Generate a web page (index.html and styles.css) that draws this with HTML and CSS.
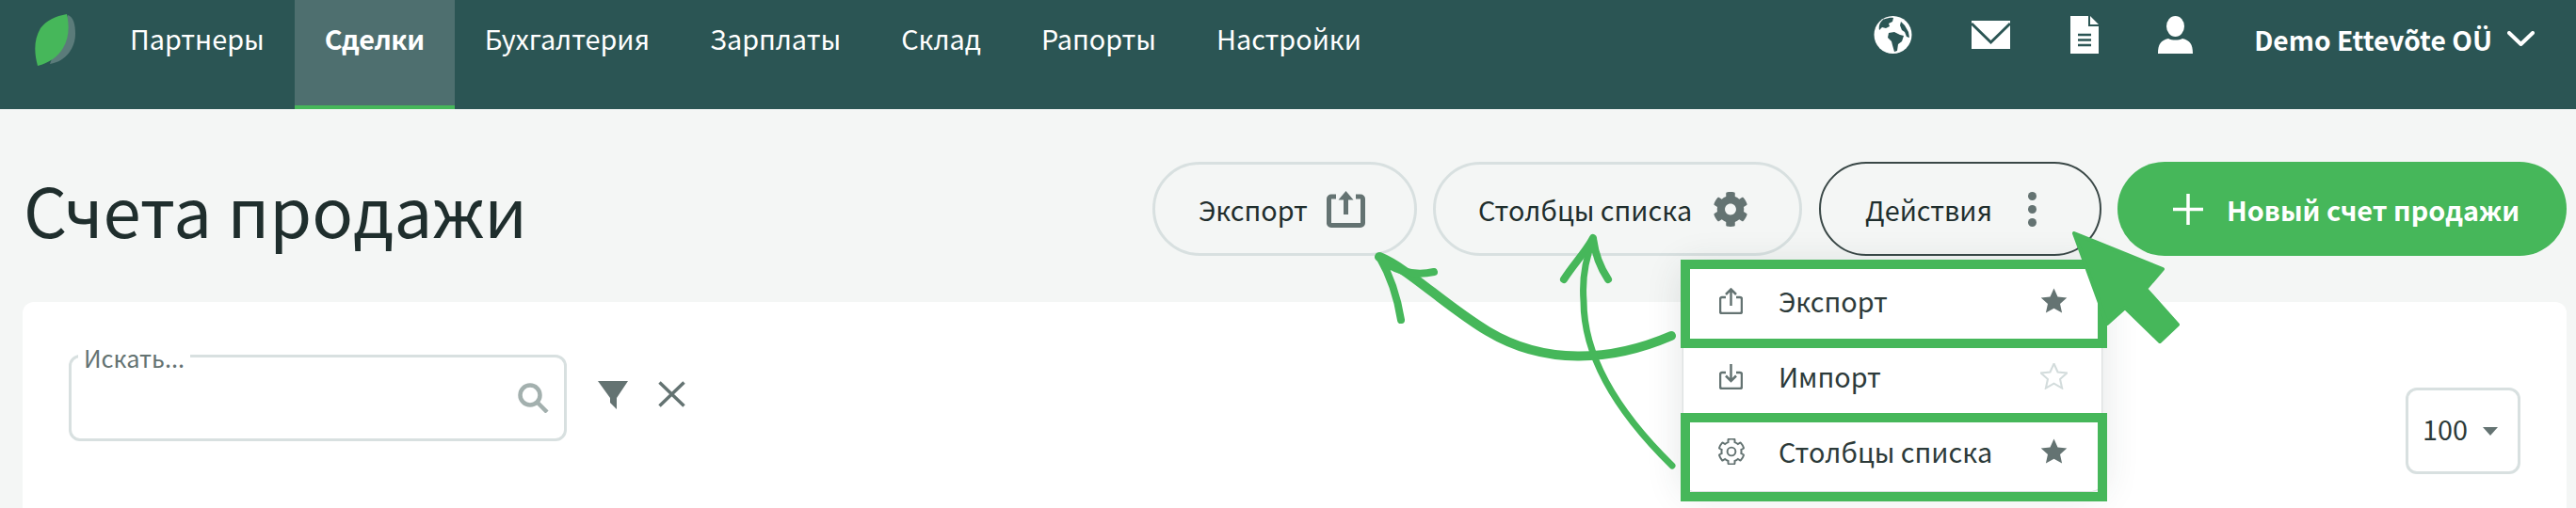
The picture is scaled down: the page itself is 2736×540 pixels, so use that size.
FILE: index.html
```html
<!DOCTYPE html>
<html lang="ru">
<head>
<meta charset="utf-8">
<title>Счета продажи</title>
<link rel="stylesheet" href="styles.css">
</head>
<body>
<svg class="defs" width="0" height="0" aria-hidden="true">
  <symbol id="gear" viewBox="0 0 512 512"><path d="M487.4 315.7l-42.6-24.6c4.3-23.2 4.3-47 0-70.2l42.6-24.6c4.9-2.8 7.1-8.6 5.5-14-11.1-35.6-30-67.8-54.7-94.6-3.8-4.1-10-5.1-14.8-2.3L380.8 110c-17.9-15.4-38.5-27.3-60.8-35.1V25.8c0-5.6-3.9-10.5-9.4-11.7-36.7-8.2-74.3-7.8-109.2 0-5.5 1.2-9.4 6.1-9.4 11.7V75c-22.2 7.9-42.8 19.8-60.8 35.1L88.7 85.5c-4.9-2.8-11-1.9-14.8 2.3-24.7 26.7-43.6 58.9-54.7 94.6-1.7 5.4.6 11.2 5.5 14L67.3 221c-4.3 23.2-4.3 47 0 70.2l-42.6 24.6c-4.9 2.8-7.1 8.6-5.5 14 11.1 35.6 30 67.8 54.7 94.6 3.8 4.1 10 5.1 14.8 2.3l42.6-24.6c17.9 15.4 38.5 27.3 60.8 35.1v49.2c0 5.6 3.9 10.5 9.4 11.7 36.7 8.2 74.3 7.8 109.2 0 5.5-1.2 9.4-6.1 9.4-11.7v-49.2c22.2-7.9 42.8-19.8 60.8-35.1l42.6 24.6c4.9 2.8 11 1.9 14.8-2.3 24.7-26.7 43.6-58.9 54.7-94.6 1.5-5.5-.7-11.3-5.6-14.1zM256 336c-44.1 0-80-35.9-80-80s35.9-80 80-80 80 35.9 80 80-35.9 80-80 80z"/></symbol>
  <symbol id="star" viewBox="1 1 28 27"><path d="M15 1.5l3.9 8.6 9.4 1-7 6.3 2 9.2L15 21.9l-8.3 4.7 2-9.2-7-6.3 9.4-1z"/></symbol>
</svg>

<header class="topbar">
  <svg class="logo" viewBox="0 0 43 55" width="43" height="55">
    <path class="leaf-shadow" d="M35 1c6 2 8 10 8 20 0 14-9 29-27 32z"/>
    <path class="leaf" d="M34 0c3 14 2 26-4 36C25 45 15 52 3 55-1 40-1 27 6 15 12 7 22 2 34 0z"/>
  </svg>
  <nav class="nav">
    <a class="nav-item">Партнеры</a>
    <a class="nav-item nav-item-active">Сделки</a>
    <a class="nav-item">Бухгалтерия</a>
    <a class="nav-item">Зарплаты</a>
    <a class="nav-item">Склад</a>
    <a class="nav-item">Рапорты</a>
    <a class="nav-item">Настройки</a>
  </nav>
  <div class="top-right">
    <svg class="top-icon globe" viewBox="0 0 41 40" width="41" height="40">
      <circle class="w" cx="20.5" cy="20" r="20"/>
      <path class="d" d="M11 3.500c4-1.500 8-2 10-1.500l-1 4-4 2 1 3-4 2-4-1-3 3c-1-5 1-9 5-12zM16 18l6-1 6 3 4 1-2 6-4 3-1 7-3 1-2-7-1-4-4-4zM29 6l4 4 4 7 1 6-3-1-2-5-3-2-2-5z"/>
    </svg>
    <svg class="top-icon mail" viewBox="0 0 41 30" width="41" height="30">
      <path class="w" d="M0 0h41v30H0z"/>
      <path class="stroke-d" d="M0 3l20.5 20L41 3"/>
    </svg>
    <svg class="top-icon doc" viewBox="0 0 30 40" width="30" height="40">
      <path class="w" d="M0 0h19v11h11v29H0zM21 0l9 9h-9z"/>
      <path class="stroke-d thin" d="M8 20h14M8 25.500h14M8 31h14"/>
    </svg>
    <svg class="top-icon user" viewBox="0 0 37 40" width="37" height="40">
      <ellipse class="w" cx="18.500" cy="11" rx="9.500" ry="11"/>
      <path class="w" d="M0 40c0-10 3-14 11-16 4 2 11 2 15 0 8 2 11 6 11 16z"/>
    </svg>
    <span class="company">Demo Ettevõte OÜ</span>
    <svg class="chevron" viewBox="0 0 29 16" width="29" height="16"><path d="M2 2l12.500 12L27 2"/></svg>
  </div>
</header>

<main class="content">
  <section class="title-row">
    <h1 class="page-title">Счета продажи</h1>
    <div class="actions">
      <button class="btn btn-export">Экспорт
        <svg class="btn-icon" viewBox="0 0 41 39" width="41" height="39">
          <path class="stroke-icon" d="M10 6H5a2.500 2.500 0 0 0-2.500 2.500v25A2.500 2.500 0 0 0 5 36.500h31a2.500 2.500 0 0 0 2.500-2.500V8.500A2.500 2.500 0 0 0 36 6h-5"/>
          <path class="stroke-icon" d="M20.500 25V3"/>
          <path class="fill-icon" d="M20.500 0l8 9.500h-16z"/>
        </svg>
      </button>
      <button class="btn btn-columns">Столбцы списка
        <svg class="btn-icon fill-icon" width="38" height="39"><use href="#gear"/></svg>
      </button>
      <button class="btn btn-dark">Действия
        <span class="dots"><i></i><i></i><i></i></span>
      </button>
      <button class="btn-primary">
        <svg class="plus" viewBox="0 0 32 33" width="32" height="33"><path d="M16 0v33M0 16.500h32"/></svg>
        Новый счет продажи
      </button>
    </div>
  </section>

  <section class="card">
    <div class="search">
      <span class="search-label">Искать...</span>
      <svg class="search-icon" viewBox="0 0 33 32" width="33" height="32">
        <circle cx="13" cy="13" r="10.500"/><path d="M21 21l10 10"/>
      </svg>
    </div>
    <svg class="filter" viewBox="0 0 32 30" width="32" height="30"><path d="M0 0h32L20 18v12l-7-7v-5z"/></svg>
    <svg class="clear" viewBox="0 0 29 28" width="29" height="28"><path d="M1.500 1.500l26 25M27.500 1.500l-26 25"/></svg>
    <div class="page-size">100 <span class="caret"></span></div>
  </section>
</main>

<div class="menu">
  <div class="menu-row menu-row-hl">
    <svg class="menu-icon" viewBox="0 0 25 28" width="25" height="28">
      <path d="M7 10H3a2 2 0 0 0-2 2v13a2 2 0 0 0 2 2h19a2 2 0 0 0 2-2V12a2 2 0 0 0-2-2h-4M12.500 19V1.500M7 7l5.500-5.500L18 7"/>
    </svg>
    <span class="menu-text">Экспорт</span>
    <svg class="menu-star" width="29" height="28"><use href="#star"/></svg>
  </div>
  <div class="menu-row">
    <svg class="menu-icon" viewBox="0 0 25 28" width="25" height="28">
      <path d="M7 10H3a2 2 0 0 0-2 2v13a2 2 0 0 0 2 2h19a2 2 0 0 0 2-2V12a2 2 0 0 0-2-2h-4M12.500 1v18M7 13.500l5.500 5.500 5.500-5.500"/>
    </svg>
    <span class="menu-text">Импорт</span>
    <svg class="menu-star menu-star-empty" width="29" height="28"><use href="#star"/></svg>
  </div>
  <div class="menu-row menu-row-hl">
    <svg class="menu-icon gear-outline" width="28" height="28"><use href="#gear"/></svg>
    <span class="menu-text">Столбцы списка</span>
    <svg class="menu-star" width="29" height="28"><use href="#star"/></svg>
  </div>
</div>

<svg class="annotations" viewBox="0 0 2736 540" width="2736" height="540">
  <path class="arrow thick" d="M1775 357C1710 385 1640 388 1580 352 1535 325 1495 285 1465 273"/>
  <path class="arrow head" d="M1488 340C1484 315 1476 292 1465 273 1478 287 1500 294 1523 289"/>
  <path class="arrow" d="M1776 495C1725 445 1682 385 1682 320 1680 295 1684 275 1692 255"/>
  <path class="arrow head" d="M1661 297C1672 280 1684 268 1692 253 1694 270 1700 285 1708 297"/>
  <path class="cursor" d="M2203 248L2297 286 2279 307 2313 345 2294 363 2257 327 2238 344z"/>
</svg>
</body>
</html>
```
FILE: styles.css
```css
* { box-sizing: border-box; }
html, body { margin: 0; height: 540px; overflow: hidden; }
body {
  position: relative;
  background: #f4f6f5;
  font-family: "Noto Sans CJK SC", "Noto Sans", "Liberation Sans", sans-serif;
  color: #1f2e2d;
}
.defs { position: absolute; }

.topbar {
  display: flex;
  align-items: flex-start;
  height: 116px;
  padding-left: 37px;
  background: #2b5554;
  color: #fff;
}
.logo { margin: 15px 26px 0 0; flex: none; }
.leaf { fill: #46b75a; }
.leaf-shadow { fill: #5b7b7a; }
.nav { display: flex; height: 116px; }
.nav-item {
  display: block;
  height: 116px;
  padding: 0 32px;
  font-size: 28.800px;
  line-height: 82px;
  white-space: nowrap;
}
.nav-item-active {
  background: #4e6f6f;
  border-bottom: 4px solid #46b75a;
  font-weight: 700;
  letter-spacing: -.5px;
}
.top-right {
  display: flex;
  align-items: flex-start;
  margin-left: auto;
  padding: 17px 44px 0 0;
}
.top-icon { flex: none; }
.w { fill: #fff; }
.d { fill: #2b5554; }
.stroke-d { fill: none; stroke: #2b5554; stroke-width: 3; }
.stroke-d.thin { stroke-width: 2.500; }
.mail { margin: 5px 0 0 63px; }
.doc { margin-left: 64px; }
.user { margin-left: 63px; }
.company {
  margin-left: 65px;
  font-size: 28.200px;
  font-weight: 700;
  line-height: 50px;
  white-space: nowrap;
}
.chevron { margin: 16px 0 0 16px; fill: none; stroke: #fff; stroke-width: 4; stroke-linecap: round; stroke-linejoin: round; }

.content { padding: 0 10px 0 24px; }
.title-row {
  display: flex;
  align-items: center;
  justify-content: space-between;
  margin-top: 56px;
}
.page-title {
  margin: 0 0 0 1px;
  font-size: 72.500px;
  font-weight: 400;
  line-height: 100px;
}
.actions { display: flex; gap: 17px; }
.btn {
  display: flex;
  align-items: center;
  height: 100px;
  padding: 0 0 0 46px;
  border: 3px solid #d8e0e0;
  border-radius: 50px;
  background: transparent;
  font: 400 28.800px "Noto Sans CJK SC", "Noto Sans", "Liberation Sans", sans-serif;
  color: #1f2e2d;
  white-space: nowrap;
}
.btn-export { width: 281px; gap: 20px; }
.btn-columns { width: 392px; gap: 22px; padding-left: 45px; }
.btn-dark { width: 300px; margin-left: 1px; gap: 38px; padding-left: 47px; border: 2px solid #3a4847; }
.btn-icon { flex: none; }
.fill-icon { fill: #647372; }
.stroke-icon { fill: none; stroke: #647372; stroke-width: 5; }
.dots { display: flex; flex-direction: column; gap: 5px; }
.dots i { display: block; width: 9px; height: 9px; border-radius: 50%; background: #647372; }
.btn-primary {
  display: flex;
  align-items: center;
  gap: 25px;
  width: 477px;
  height: 100px;
  padding: 0 0 0 59px;
  border: 0;
  border-radius: 50px;
  background: #46b75a;
  color: #fff;
  font: 700 28.800px "Noto Sans CJK SC", "Noto Sans", "Liberation Sans", sans-serif;
  white-space: nowrap;
}
.plus { flex: none; fill: none; stroke: #fff; stroke-width: 3.500; stroke-linecap: round; }

.card {
  display: flex;
  align-items: flex-start;
  height: 219px;
  margin-top: 49px;
  padding: 56px 49px 0;
  border-radius: 12px 12px 0 0;
  background: #fff;
}
.search {
  position: relative;
  flex: none;
  width: 529px;
  height: 92px;
  border: 3px solid #d8e0e0;
  border-radius: 12px;
}
.search-label {
  position: absolute;
  left: 7px;
  top: -16px;
  padding: 0 6px;
  background: #fff;
  font-size: 25.300px;
  line-height: 32px;
  color: #647372;
}
.search-icon {
  position: absolute;
  right: 16px;
  top: 27px;
  fill: none;
  stroke: #a3b0ae;
  stroke-width: 4.500;
}
.filter { margin: 28px 0 0 33px; fill: #647372; flex: none; }
.clear { margin: 28px 0 0 32px; fill: none; stroke: #647372; stroke-width: 3.500; flex: none; }
.page-size {
  display: flex;
  align-items: center;
  gap: 16px;
  width: 122px;
  height: 92px;
  margin: 35px 0 0 auto;
  padding: 0 0 6px 15px;
  border: 3px solid #d8e0e0;
  border-radius: 12px;
  font-size: 28.800px;
  color: #2c3a39;
}
.caret {
  width: 0;
  height: 0;
  margin-top: 6px;
  border: 8px solid transparent;
  border-top: 9px solid #647372;
  border-bottom: 0;
}

.menu {
  position: absolute;
  left: 1788px;
  top: 282px;
  width: 444px;
  height: 240px;
  border-radius: 0 0 10px 10px;
  background: #fff;
  box-shadow: 0 2px 40px rgba(40, 60, 60, .14), 0 0 2px rgba(40, 60, 60, .35);
}
.menu-row {
  position: relative;
  display: flex;
  align-items: center;
  height: 80px;
  padding: 0 36px 4px 38px;
}
.menu-row-hl::after {
  content: "";
  position: absolute;
  box-sizing: border-box;
  left: -3px;
  right: -6px;
  top: -6px;
  height: 94px;
  border: 10px solid #46b75a;
}
.menu-row:last-child::after { top: -3px; }
.menu-icon { flex: none; fill: none; stroke: #647372; stroke-width: 2.500; }
.gear-outline { margin: 0 -2px 0 -1px; stroke-width: 36; overflow: visible; }
.menu-text { margin-left: 38px; padding-bottom: 2px; font-size: 28.800px; color: #2c3a39; white-space: nowrap; }
.menu-star { flex: none; margin-left: auto; fill: #647372; }
.menu-star-empty { fill: none; stroke: #d3dcdc; stroke-width: 2; }

.annotations { position: absolute; left: 0; top: 0; pointer-events: none; }
.arrow { fill: none; stroke: #46b75a; stroke-width: 7; stroke-linecap: round; stroke-linejoin: round; }
.arrow.thick { stroke-width: 10; }
.arrow.head { stroke-width: 8; }
.cursor { fill: #46b75a; stroke: #46b75a; stroke-width: 4; stroke-linejoin: round; }
```
